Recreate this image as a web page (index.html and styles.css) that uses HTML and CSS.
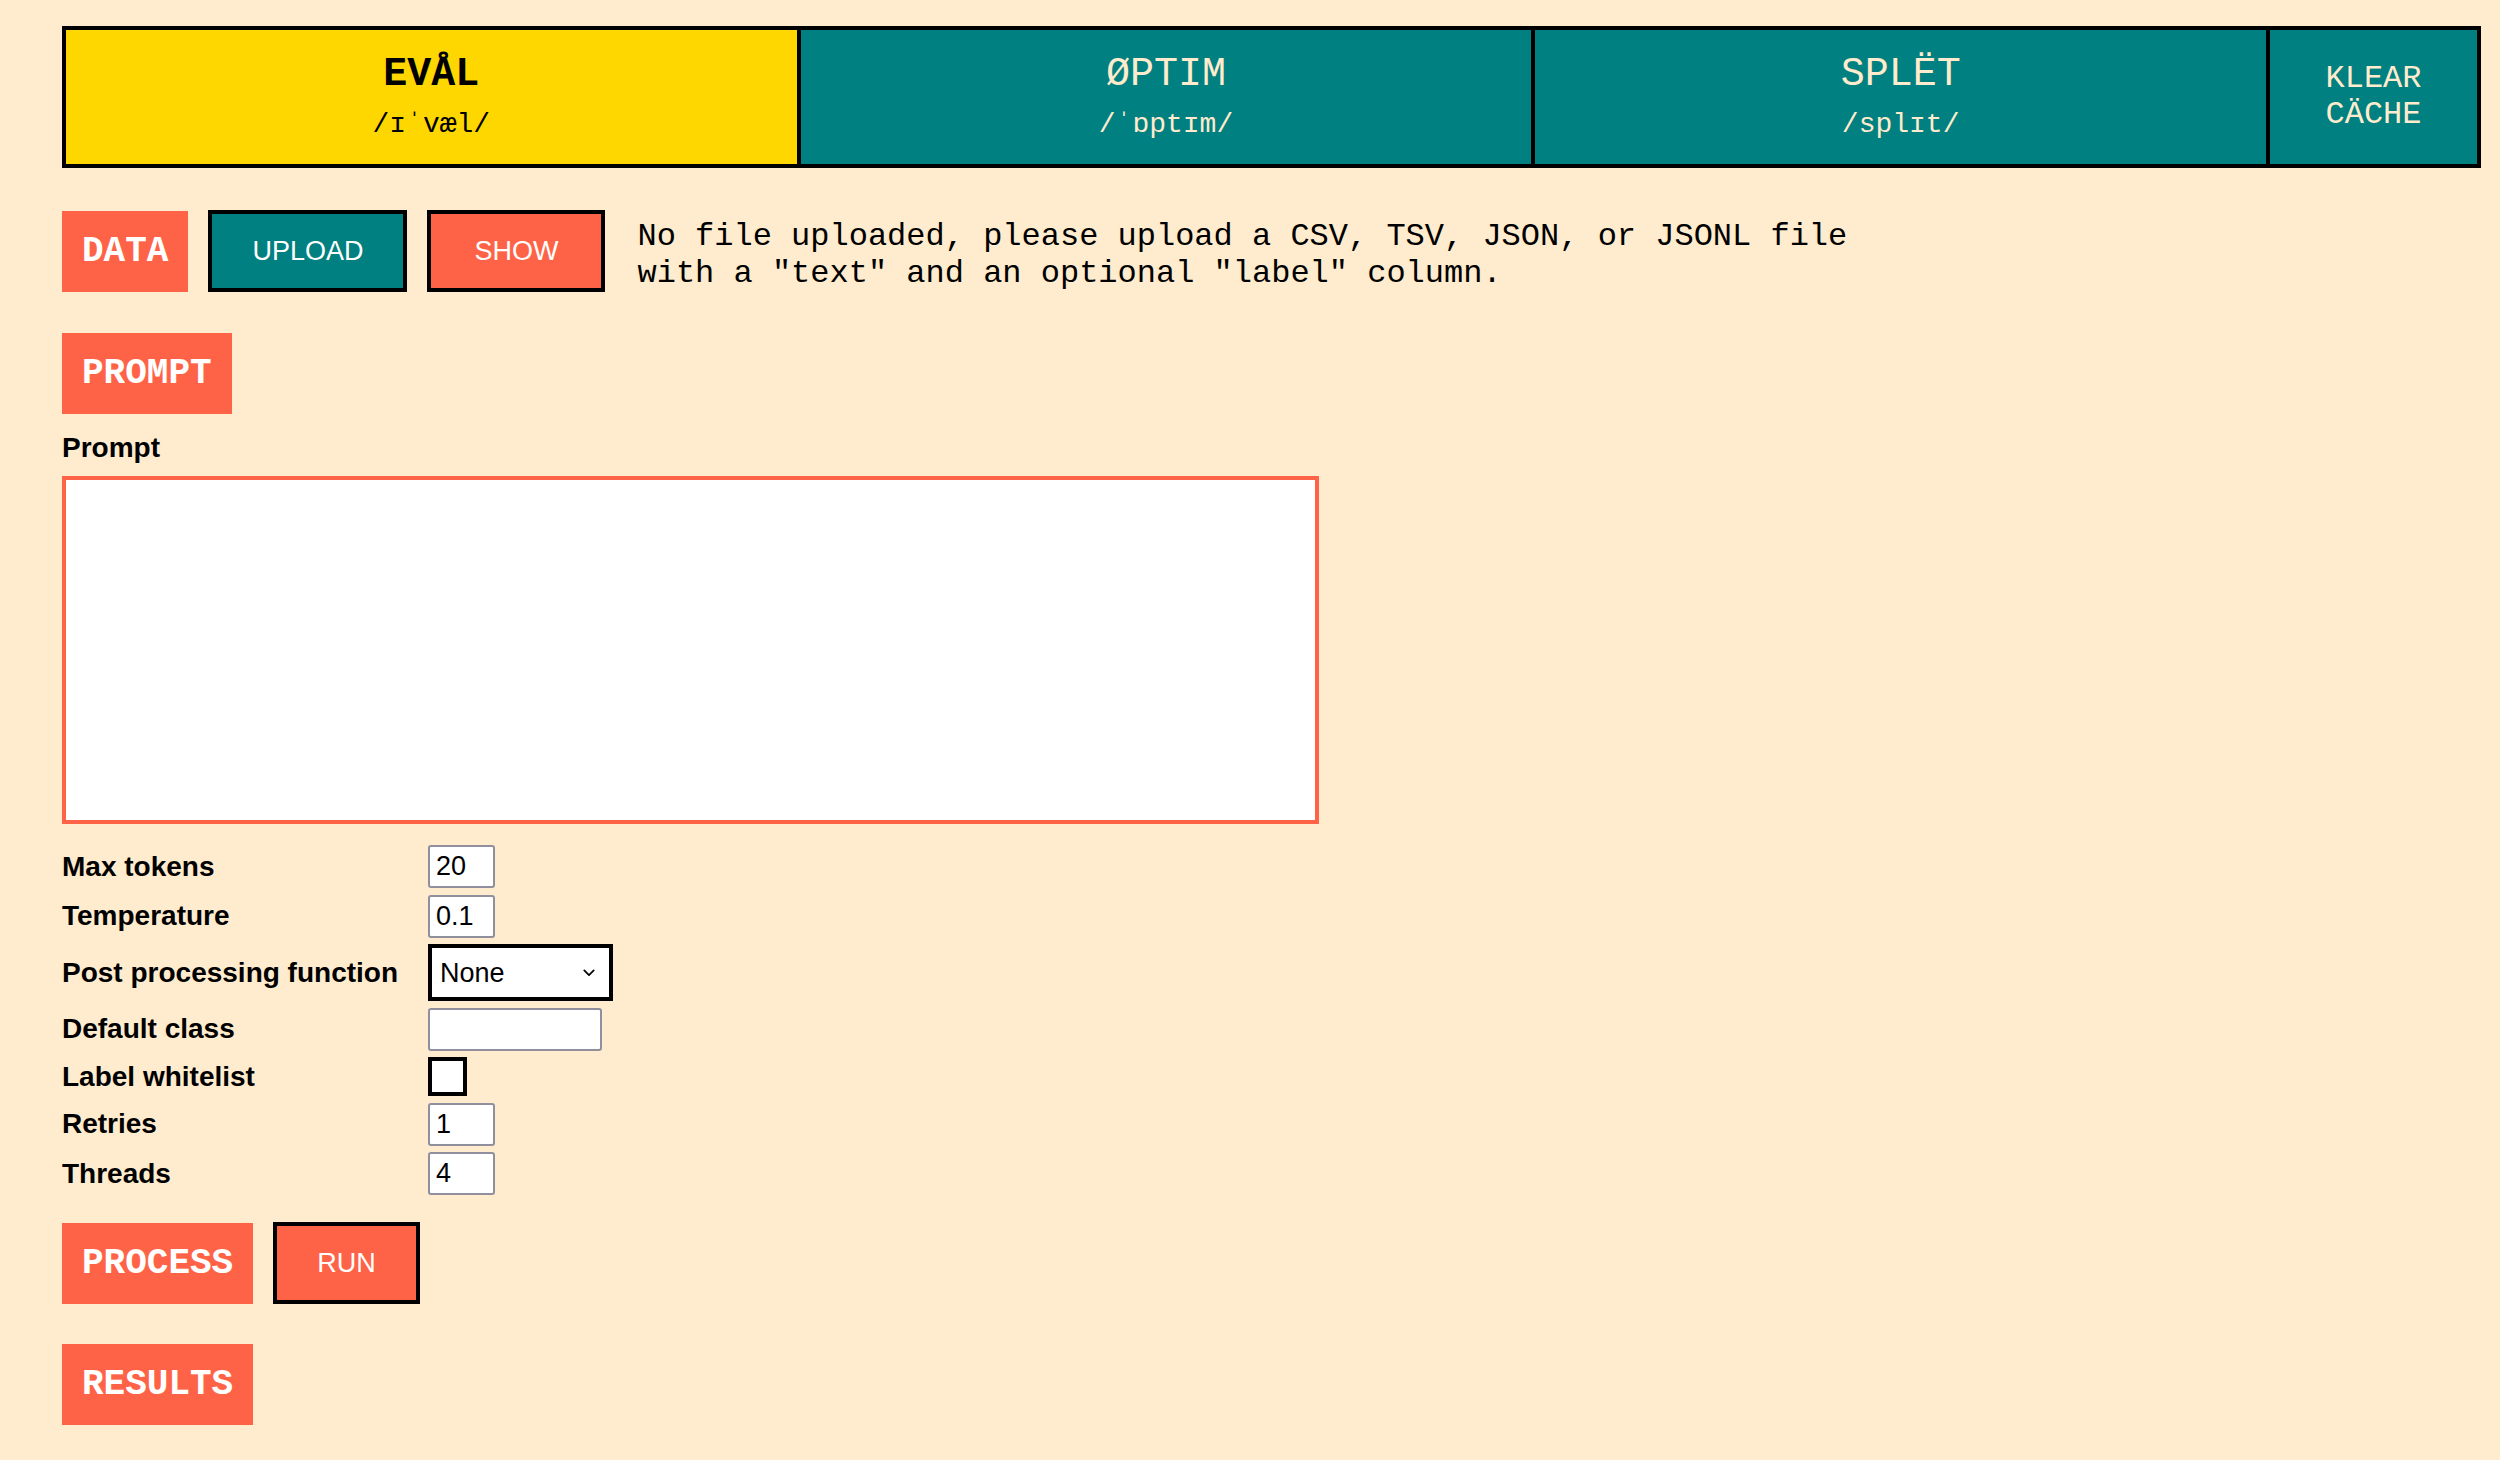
FILE: index.html
```html
<!DOCTYPE html>
<html lang="en">
<head>
<meta charset="utf-8">
<title>EVÅL</title>
<link rel="stylesheet" href="styles.css">
</head>
<body>
<nav class="tabs">
  <a class="tab tab-active" href="#">
    <span class="tab-title">EVÅL</span>
    <span class="tab-sub">/ɪˈvæl/</span>
  </a>
  <a class="tab" href="#">
    <span class="tab-title">ØPTIM</span>
    <span class="tab-sub">/ˈɒptɪm/</span>
  </a>
  <a class="tab" href="#">
    <span class="tab-title">SPLËT</span>
    <span class="tab-sub">/splɪt/</span>
  </a>
  <a class="tab tab-small" href="#">
    <span class="tab-small-text">KLEAR<br>CÄCHE</span>
  </a>
</nav>

<section class="section section-data">
  <div class="section-row">
    <h2 class="badge">DATA</h2>
    <button class="btn btn-teal">UPLOAD</button>
    <button class="btn btn-coral btn-show">SHOW</button>
    <p class="note">No file uploaded, please upload a CSV, TSV, JSON, or JSONL file<br>with a "text" and an optional "label" column.</p>
  </div>
</section>

<section class="section section-prompt">
  <h2 class="badge">PROMPT</h2>
  <label class="field-label" for="prompt">Prompt</label>
  <textarea id="prompt" class="prompt-box"></textarea>

  <div class="params">
    <label class="param-label" for="max-tokens">Max tokens</label>
    <input id="max-tokens" class="input input-num" type="text" value="20">

    <label class="param-label" for="temperature">Temperature</label>
    <input id="temperature" class="input input-num" type="text" value="0.1">

    <label class="param-label" for="post">Post processing function</label>
    <div class="select-wrap">
      <select id="post" class="select">
        <option>None</option>
      </select>
      <svg class="select-chevron" viewBox="0 0 14 9" width="14" height="9" aria-hidden="true">
        <path d="M1.5 1.5 L7 7 L12.5 1.5" fill="none" stroke="#000" stroke-width="2" stroke-linecap="round" stroke-linejoin="round"/>
      </svg>
    </div>

    <label class="param-label" for="default-class">Default class</label>
    <input id="default-class" class="input input-wide" type="text" value="">

    <label class="param-label" for="whitelist">Label whitelist</label>
    <input id="whitelist" class="checkbox" type="checkbox">

    <label class="param-label" for="retries">Retries</label>
    <input id="retries" class="input input-num" type="text" value="1">

    <label class="param-label" for="threads">Threads</label>
    <input id="threads" class="input input-num" type="text" value="4">
  </div>
</section>

<section class="section section-process">
  <div class="section-row">
    <h2 class="badge">PROCESS</h2>
    <button class="btn btn-coral">RUN</button>
  </div>
</section>

<section class="section section-results">
  <h2 class="badge">RESULTS</h2>
</section>
</body>
</html>
```

FILE: styles.css
```css
html, body {
  margin: 0;
  background: #ffebcd;
}

body {
  padding: 26px 19px 0 62px;
  font-family: "Liberation Sans", Arial, sans-serif;
  color: #000;
}

/* ---------- tabs ---------- */
.tabs {
  display: grid;
  grid-template-columns: 1fr 1fr 1fr 207px;
  height: 142px;
  box-sizing: border-box;
  border: 4px solid #000;
  background: #008080;
}

.tab {
  display: flex;
  flex-direction: column;
  align-items: center;
  justify-content: center;
  gap: 10px;
  text-decoration: none;
  color: #ffebcd;
  font-family: "Liberation Mono", "DejaVu Sans Mono", monospace;
  border-right: 4px solid #000;
}

.tab:last-child {
  border-right: 0;
}

.tab-active {
  background: #ffd700;
  color: #000;
}

.tab-title {
  font-size: 40px;
  line-height: 46px;
}

.tab-active .tab-title {
  font-weight: bold;
}

.tab-sub {
  font-size: 28px;
  line-height: 34px;
}

.tab-small-text {
  font-size: 32px;
  line-height: 36px;
  text-align: center;
}

/* ---------- sections ---------- */
.section-row {
  display: flex;
  align-items: center;
  gap: 20px;
}

.section-data { margin-top: 42px; }
.section-prompt { margin-top: 41px; }
.section-process { margin-top: 27px; }
.section-results { margin-top: 40px; }

.badge {
  display: inline-flex;
  align-items: center;
  height: 81px;
  box-sizing: border-box;
  margin: 0;
  padding: 0 20px;
  background: #ff6347;
  color: #fff;
  font-family: "Liberation Mono", "DejaVu Sans Mono", monospace;
  font-size: 36px;
  font-weight: bold;
}

.btn {
  height: 82px;
  box-sizing: border-box;
  padding: 0 40px;
  border: 4px solid #000;
  color: #fff;
  font-family: "Liberation Sans", Arial, sans-serif;
  font-size: 27px;
  cursor: pointer;
}

.btn-teal { background: #008080; }
.btn-coral { background: #ff6347; }
.btn-show { padding: 0 43px; }

.note {
  margin: 8px 0 0 12px;
  font-family: "Liberation Mono", "Courier New", monospace;
  font-size: 32px;
  line-height: 37px;
  color: #000;
}

/* ---------- prompt ---------- */
.field-label {
  display: block;
  margin-top: 18px;
  font-size: 28px;
  line-height: 32px;
  font-weight: bold;
}

.prompt-box {
  display: block;
  margin-top: 12px;
  width: 1257px;
  height: 348px;
  box-sizing: border-box;
  border: 4px solid #ff6347;
  background: #fff;
  resize: none;
  outline: none;
}

/* ---------- params ---------- */
.params {
  display: grid;
  grid-template-columns: max-content max-content;
  column-gap: 30px;
  row-gap: 6.5px;
  align-items: center;
  margin-top: 21px;
}

.param-label {
  font-size: 28px;
  line-height: 32px;
  font-weight: bold;
}

.input {
  height: 43px;
  box-sizing: border-box;
  border: 2px solid #8f8f9d;
  border-radius: 3px;
  padding: 0 6px;
  background: #fff;
  font-family: "Liberation Sans", Arial, sans-serif;
  font-size: 27px;
  color: #000;
}

.input-num { width: 67px; }
.input-wide { width: 174px; }

.select-wrap {
  position: relative;
  width: 185px;
  height: 57px;
}

.select {
  width: 100%;
  height: 100%;
  box-sizing: border-box;
  border: 4px solid #000;
  border-radius: 0;
  padding: 0 8px;
  background: #fff;
  appearance: none;
  -webkit-appearance: none;
  font-family: "Liberation Sans", Arial, sans-serif;
  font-size: 27px;
  color: #000;
}

.select-chevron {
  position: absolute;
  right: 18px;
  top: 25px;
  width: 12px;
  height: 8px;
  pointer-events: none;
}

.checkbox {
  appearance: none;
  -webkit-appearance: none;
  align-self: start;
  margin: 0;
  width: 39px;
  height: 39px;
  box-sizing: border-box;
  border: 4px solid #000;
  background: #fff;
}
```
